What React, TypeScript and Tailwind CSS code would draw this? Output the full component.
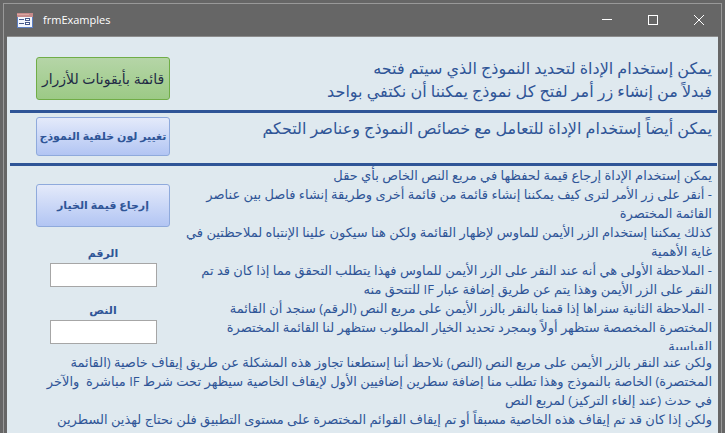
import type { ReactNode } from "react";

const introLines = [
  "يمكن إستخدام الإداة لتحديد النموذج الذي سيتم فتحه",
  "فبدلاً من إنشاء زر أمر لفتح كل نموذج يمكننا أن نكتفي بواحد",
];

const propertyLines = ["يمكن أيضاً إستخدام الإداة للتعامل مع خصائص النموذج وعناصر التحكم"];

const valueLines = [
  "يمكن إستخدام الإداة إرجاع قيمة لحفظها في مربع النص الخاص بأي حقل",
  "- أنقر على زر الأمر لترى كيف يمكننا إنشاء قائمة من قائمة أخرى وطريقة إنشاء فاصل بين عناصر",
  "القائمة المختصرة",
  "كذلك يمكننا إستخدام الزر الأيمن للماوس لإظهار القائمة ولكن هنا سيكون علينا الإنتباه لملاحظتين في",
  "غاية الأهمية",
  "- الملاحظة الأولى هي أنه عند النقر على الزر الأيمن للماوس فهذا يتطلب التحقق مما إذا كان قد تم",
  "النقر على الزر الأيمن وهذا يتم عن طريق إضافة عبار IF للتتحق منه",
  "- الملاحظة الثانية سنراها إذا قمنا بالنقر بالزر الأيمن على مربع النص (الرقم) سنجد أن القائمة",
  "المختصرة المخصصة ستظهر أولاً وبمجرد تحديد الخيار المطلوب ستظهر لنا القائمة المختصرة",
  "القياسية",
];

const noteLines = [
  "ولكن عند النقر بالزر الأيمن على مربع النص (النص) نلاحظ أننا إستطعنا تجاوز هذه المشكلة عن طريق إيقاف خاصية (القائمة",
  "المختصرة) الخاصة بالنموذج وهذا تطلب منا إضافة سطرين إضافيين الأول لإيقاف الخاصية سيظهر تحت شرط IF مباشرة  والآخر",
  "في حدث (عند إلغاء التركيز) لمربع النص",
  "ولكن إذا كان قد تم إيقاف هذه الخاصية مسبقاً أو تم إيقاف القوائم المختصرة على مستوى التطبيق فلن نحتاج لهذين السطرين",
];

const Lines = ({ lines, className }: { lines: string[]; className: string }) => (
  <p dir="rtl" className={`whitespace-pre text-[#2f5597] ${className}`}>
    {lines.map((line) => (
      <span key={line} className="block">
        {line}
      </span>
    ))}
  </p>
);

const FormButton = ({ className, children }: { className: string; children: ReactNode }) => (
  <button
    type="button"
    dir="rtl"
    className={`w-full whitespace-nowrap rounded-[3px] border ${className}`}
  >
    {children}
  </button>
);

const FormIcon = () => (
  <svg width="16" height="15" viewBox="0 0 16 15" aria-hidden="true">
    <rect width="16" height="15" fill="#5d80c4" />
    <rect width="16" height="4" fill="#c58a8a" />
    <rect y="1" width="12" height="1" fill="#dba5a0" />
    <rect x="1" y="4" width="14" height="10" fill="#f2f5fc" />
    <path d="M2 6.5h5M2 10.5h5" stroke="#46598c" />
    <rect x="8.5" y="5.5" width="4" height="2" fill="#fff" stroke="#46598c" />
    <rect x="8.5" y="9.5" width="4" height="2" fill="#fff" stroke="#46598c" />
  </svg>
);

const TitleBar = () => (
  <header className="flex h-8 items-center pl-[13px] pr-[17px] text-white">
    <FormIcon />
    <h1 className="ml-[10px] flex-1 text-[11px]">frmExamples</h1>
    <div className="flex gap-9">
      <button type="button" aria-label="Minimize">
        <svg width="10" height="10" viewBox="0 0 10 10">
          <path d="M0 4.5h10" stroke="#fff" />
        </svg>
      </button>
      <button type="button" aria-label="Maximize">
        <svg width="10" height="10" viewBox="0 0 10 10">
          <rect x=".5" y=".5" width="9" height="9" fill="none" stroke="#fff" />
        </svg>
      </button>
      <button type="button" aria-label="Close">
        <svg width="10" height="10" viewBox="0 0 10 10">
          <path d="M0 0l10 10M10 0L0 10" stroke="#fff" />
        </svg>
      </button>
    </div>
  </header>
);

const Rule = () => <hr className="ml-[3px] mr-px h-[3px] border-0 bg-[#2f5597]" />;

const blueButton = "border-[#8faadc] bg-linear-to-b from-[#e4eafa] to-[#b2c5f3] text-[#2f5597]";

const App = () => {
  return (
    <div className="h-screen overflow-hidden bg-[#666666] px-[3px] pt-[3px] font-['Open_Sans','DejaVu_Sans',sans-serif]">
      <div className="h-full border-x border-t border-[#999999]">
        <TitleBar />
        <main className="mx-[3px] h-full overflow-hidden border-t border-[#8c8c8c] bg-[#dfe9ef]">
          <section className="flex h-[73px] items-start justify-between pl-[29px] pr-[6px] pt-5">
            <div className="w-[134px] shrink-0">
              <FormButton className="h-[43px] border-[#70ad47] bg-linear-to-b from-[#b5d5a7] to-[#9cca86] text-[14px] text-[#222a45]">
                قائمة بأيقونات للأزرار
              </FormButton>
            </div>
            <Lines lines={introLines} className="text-[16px] leading-[23px]" />
          </section>
          <Rule />
          <section className="flex h-[50px] items-start justify-between pl-[29px] pr-[6px] pt-1">
            <div className="w-[134px] shrink-0">
              <FormButton className={`h-[39px] text-[11px] font-bold ${blueButton}`}>
                تغيير لون خلفية النموذج
              </FormButton>
            </div>
            <Lines lines={propertyLines} className="text-[16px] leading-[23px]" />
          </section>
          <Rule />
          <section className="flex h-[184px] items-start justify-between overflow-hidden pl-[29px] pr-[6px]">
            <div className="flex w-[134px] shrink-0 flex-col items-center pt-[18px]">
              <FormButton className={`h-[43px] text-[11px] font-bold ${blueButton}`}>
                إرجاع قيمة الخيار
              </FormButton>
              <label
                htmlFor="number"
                className="mt-4 h-5 text-[11px] font-bold leading-5 text-[#2f5597]"
              >
                الرقم
              </label>
              <input
                id="number"
                type="text"
                dir="rtl"
                className="h-6 w-[107px] border border-[#a6a6a6] bg-white px-1 text-[12px]"
              />
              <label
                htmlFor="text"
                className="mt-[13px] h-5 text-[11px] font-bold leading-5 text-[#2f5597]"
              >
                النص
              </label>
              <input
                id="text"
                type="text"
                dir="rtl"
                className="h-6 w-[107px] border border-[#a6a6a6] bg-white px-1 text-[12px]"
              />
            </div>
            <Lines lines={valueLines} className="text-[13px] leading-[19px]" />
          </section>
          <section className="pr-[6px] pt-[3px]">
            <Lines lines={noteLines} className="text-[13px] leading-[19px]" />
          </section>
        </main>
      </div>
    </div>
  );
};

export default App;
